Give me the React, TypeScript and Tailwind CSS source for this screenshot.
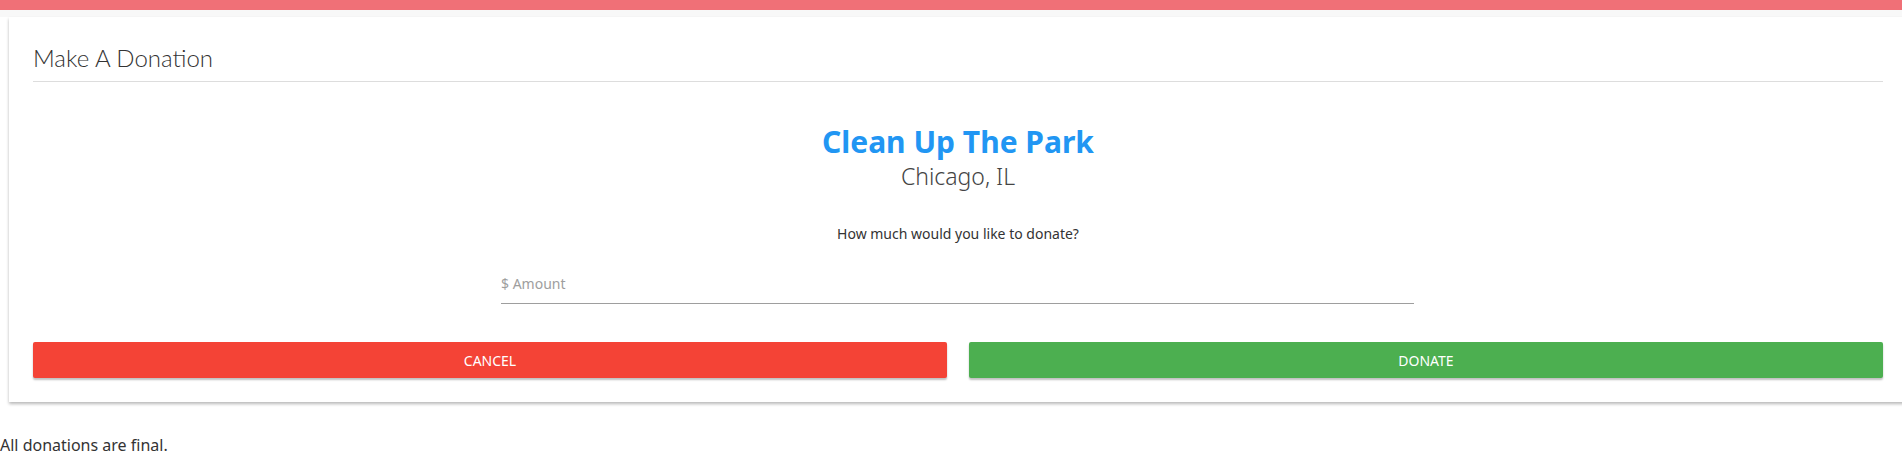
export default function App() {
  return (
    <div className="min-h-screen overflow-hidden bg-white font-['Noto_Sans',sans-serif] text-[#333]">
      {/* Top bar */}
      <div className="h-[10px] bg-[#f07077] shadow-[0_1px_2px_rgba(0,0,0,0.25)]" />
      <div className="h-[7px] bg-[#f8f8f8]" />

      {/* Card */}
      <div className="ml-[9px] w-[1898px] bg-white px-6 pb-6 shadow-[0_2px_3px_rgba(0,0,0,0.28)]">
        <h2 className="border-b border-[#ddd] pt-[26px] pb-[9px] font-['Lato',sans-serif] text-[24px] font-light leading-[29px] text-[#333]">
          Make A Donation
        </h2>

        <div className="mt-[41px] flex flex-col items-center">
          <h1 className="text-[30px] font-bold leading-[38px] text-[#2196f3]">Clean Up The Park</h1>
          <div className="text-[23px] font-light leading-[30px] text-[#444]">Chicago, IL</div>
          <p className="mt-[33px] text-[14px] leading-[20px] text-[#333]">How much would you like to donate?</p>
        </div>

        <div className="ml-[468px] mt-[26px] w-[913px]">
          <input
            type="text"
            placeholder="$ Amount"
            className="h-[34px] w-full border-b border-[#9e9e9e] bg-transparent pb-[6px] text-[14px] text-[#333] outline-none placeholder:text-[#9e9e9e]"
          />
        </div>

        <div className="mt-[38px] grid grid-cols-2 gap-[22px]">
          <button className="h-9 rounded-[2px] bg-[#f44336] text-[14px] uppercase text-white shadow-[0_2px_2px_rgba(0,0,0,0.25)]">
            Cancel
          </button>
          <button className="h-9 rounded-[2px] bg-[#4caf50] text-[14px] uppercase text-white shadow-[0_2px_2px_rgba(0,0,0,0.25)]">
            Donate
          </button>
        </div>
      </div>

      <p className="mt-[32px] text-[16px] leading-[22px] text-[#333]">All donations are final.</p>
    </div>
  )
}
